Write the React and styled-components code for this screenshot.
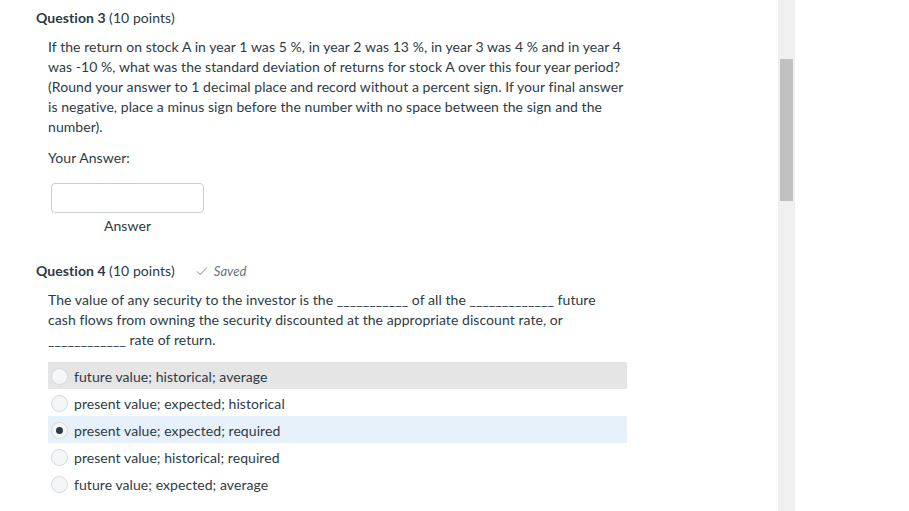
import React from 'react'
import styled, { createGlobalStyle } from 'styled-components'

const GlobalStyle = createGlobalStyle`
  body {
    margin: 0;
    background: #fff;
    font-family: Lato, "Open Sans", sans-serif;
    color: #2d3b45;
    letter-spacing: 0.065px;
  }
`

const options = [
  { label: 'future value; historical; average', tone: 'hover' },
  { label: 'present value; expected; historical' },
  { label: 'present value; expected; required', tone: 'selected', checked: true },
  { label: 'present value; historical; required' },
  { label: 'future value; expected; average' },
]

export default function App () {
  return (
    <>
      <GlobalStyle />
      <StyledPage>
        <StyledContent>
          <StyledQuestion>
            <StyledHeader>
              <h3>Question 3 <span>(10 points)</span></h3>
            </StyledHeader>
            <StyledText>
              If the return on stock A in year 1 was 5 %, in year 2 was 13 %, in year 3 was 4 % and in year 4
              was -10 %, what was the standard deviation of returns for stock A over this four year period?
              (Round your answer to 1 decimal place and record without a percent sign. If your final answer
              is negative, place a minus sign before the number with no space between the sign and the
              number).
            </StyledText>
            <StyledLabel>Your Answer:</StyledLabel>
            <StyledAnswer>
              <input type="text" aria-label="Answer" />
              <span>Answer</span>
            </StyledAnswer>
          </StyledQuestion>

          <StyledQuestion>
            <StyledHeader>
              <h3>Question 4 <span>(10 points)</span></h3>
              <StyledSaved>
                <svg width="12" height="10" viewBox="0 0 12 10">
                  <path d="M1 5.5 L4.2 8.5 L11 1.5" fill="none" stroke="#b5bcc1" strokeWidth="1.3" />
                </svg>
                Saved
              </StyledSaved>
            </StyledHeader>
            <StyledText>
              The value of any security to the investor is the ___________ of all the _____________ future
              cash flows from owning the security discounted at the appropriate discount rate, or
              ____________ rate of return.
            </StyledText>
            <StyledOptions>
              {options.map((o) => (
                <StyledOption key={o.label} tone={o.tone}>
                  <StyledRadio checked={o.checked} />
                  {o.label}
                </StyledOption>
              ))}
            </StyledOptions>
          </StyledQuestion>
        </StyledContent>
        <StyledScrollbar>
          <div className="thumb" />
        </StyledScrollbar>
      </StyledPage>
    </>
  )
}

const StyledPage = styled.div`
  display: flex;
  height: 511px;
  overflow: hidden;
`

const StyledContent = styled.div`
  width: 742px;
  padding-left: 36px;
  padding-top: 8px;
`

const StyledQuestion = styled.div`
  margin-bottom: 25px;
`

const StyledHeader = styled.div`
  display: flex;
  align-items: center;
  height: 20px;
  h3 {
    margin: 0;
    font-size: 14px;
    font-weight: 700;
    line-height: 20px;
    span {
      font-weight: 400;
    }
  }
`

const StyledSaved = styled.div`
  display: flex;
  align-items: center;
  gap: 6px;
  margin-left: 21px;
  font-size: 13px;
  font-style: italic;
  color: #66737c;
`

const StyledText = styled.p`
  margin: 9px 0 0 12px;
  width: 576px;
  font-size: 14px;
  line-height: 20px;
`

const StyledLabel = styled.div`
  margin: 11px 0 0 12px;
  font-size: 14px;
  line-height: 20px;
`

const StyledAnswer = styled.div`
  display: flex;
  flex-direction: column;
  align-items: center;
  width: 153px;
  margin: 15px 0 0 15px;
  input {
    box-sizing: border-box;
    width: 153px;
    height: 30px;
    border: 1px solid #c7cdd1;
    border-radius: 4px;
    background: #fff;
    outline: none;
  }
  span {
    margin-top: 3px;
    font-size: 14px;
    line-height: 20px;
  }
`

const StyledOptions = styled.div`
  margin: 12px 0 0 12px;
  width: 579px;
`

const StyledOption = styled.div`
  display: flex;
  align-items: center;
  gap: 6px;
  height: 27px;
  padding-left: 3px;
  padding-top: 1px;
  box-sizing: border-box;
  font-size: 14px;
  background: ${(p) =>
    p.tone === 'hover' ? '#e5e5e5' : p.tone === 'selected' ? '#e7f1fb' : 'transparent'};
`

const StyledRadio = styled.span`
  position: relative;
  box-sizing: border-box;
  width: 17px;
  height: 17px;
  border-radius: 50%;
  border: 1px solid #d4d8db;
  background: #f5f6f7;
  flex-shrink: 0;
  &::after {
    content: '';
    display: ${(p) => (p.checked ? 'block' : 'none')};
    position: absolute;
    left: 4px;
    top: 4px;
    width: 7px;
    height: 7px;
    border-radius: 50%;
    background: #2d3b45;
  }
`

const StyledScrollbar = styled.div`
  width: 17px;
  height: 511px;
  background: #f0f0f0;
  flex-shrink: 0;
  .thumb {
    margin: 59px 0 0 2px;
    width: 13px;
    height: 142px;
    background: #c1c1c1;
  }
`
